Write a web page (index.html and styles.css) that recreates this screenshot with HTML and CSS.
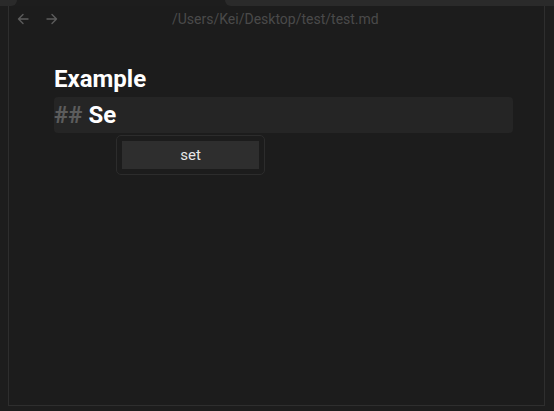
FILE: index.html
```html
<!DOCTYPE html>
<html>
<head>
<meta charset="utf-8">
<link rel="stylesheet" href="styles.css">
</head>
<body>
<div class="tabbar">
  <div class="tab-side left"></div>
  <div class="tab-active"></div>
  <div class="tab-side right"></div>
</div>
<div class="frame">
  <div class="toolbar">
    <svg class="nav" width="12" height="12" viewBox="0 0 12 12"><path d="M11 6H1.5M6 1.5L1.5 6L6 10.5" fill="none" stroke="#5c5c5c" stroke-width="1.4" stroke-linecap="round" stroke-linejoin="round"/></svg>
    <svg class="nav" width="12" height="12" viewBox="0 0 12 12"><path d="M1 6H10.5M6 1.5L10.5 6L6 10.5" fill="none" stroke="#5c5c5c" stroke-width="1.4" stroke-linecap="round" stroke-linejoin="round"/></svg>
    <div class="path">/Users/Kei/Desktop/test/test.md</div>
  </div>
  <div class="editor">
    <h1 class="heading">Example</h1>
    <div class="codeline"><span class="hash">##</span> <span class="word">Se</span></div>
  </div>
  <div class="popup">
    <div class="item">set</div>
  </div>
</div>
</body>
</html>
```
FILE: styles.css
```css
html, body {
  margin: 0;
  padding: 0;
}
body {
  width: 554px;
  height: 411px;
  overflow: hidden;
  background: #1d1d1d;
  font-family: Roboto, "Liberation Sans", sans-serif;
}
.tabbar {
  display: flex;
  height: 6px;
}
.tab-side {
  background: #2a2a2a;
}
.tab-side.left {
  width: 17px;
  border-bottom-right-radius: 6px;
}
.tab-active {
  width: 208px;
}
.tab-side.right {
  flex: 1;
  border-bottom-left-radius: 6px;
}
.frame {
  position: relative;
  margin-left: 8px;
  width: 535px;
  height: 399px;
  border-left: 1px solid #2e2e2e;
  border-right: 1px solid #2e2e2e;
  border-bottom: 1px solid #2e2e2e;
  background: #1c1c1c;
}
.toolbar {
  display: flex;
  align-items: center;
  height: 23px;
  padding-left: 8px;
  padding-top: 1px;
}
.nav {
  display: block;
  margin-right: 17px;
}
.path {
  margin-left: 97px;
  color: #4a4a4a;
  font-size: 14px;
}
.editor {
  padding: 33px 31px 0 45px;
}
.heading {
  margin: 0;
  color: #ffffff;
  font-size: 24px;
  font-weight: 700;
  line-height: 32px;
  height: 32px;
}
.codeline {
  margin-top: 2px;
  height: 36px;
  line-height: 36px;
  background: #252525;
  border-radius: 4px;
  font-size: 24px;
  font-weight: 700;
  color: #ffffff;
}
.hash {
  color: #5c5c5c;
}
.popup {
  position: absolute;
  left: 107px;
  top: 129px;
  width: 137px;
  height: 28px;
  padding: 5px;
  border: 1px solid #2c2c2c;
  border-radius: 5px;
  background: #1c1c1c;
}
.item {
  height: 28px;
  line-height: 28px;
  background: #2e2e2e;
  color: #e6e6e6;
  font-size: 15px;
  text-align: center;
}
```
